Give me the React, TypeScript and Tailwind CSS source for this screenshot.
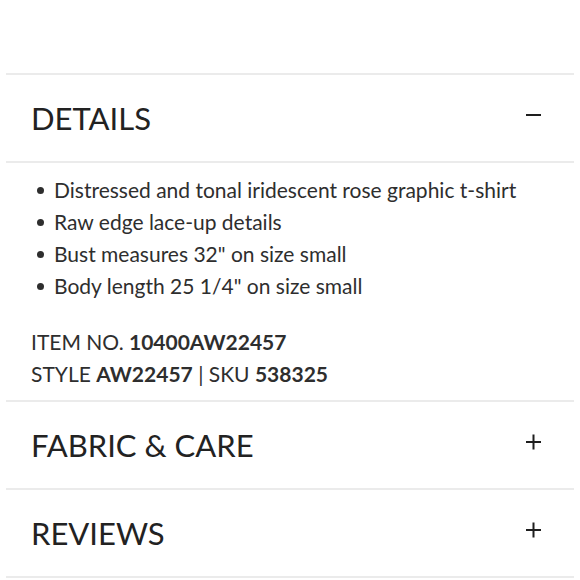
import React from "react";

const Minus = () => (
  <svg width="15" height="16" viewBox="0 0 15 16" className="block">
    <rect x="0" y="7" width="15" height="2" fill="#1e1e1e" />
  </svg>
);

const Plus = () => (
  <svg width="15" height="16" viewBox="0 0 15 16" className="block">
    <rect x="0" y="7" width="15" height="2" fill="#1e1e1e" />
    <rect x="6.5" y="0.5" width="2" height="15" fill="#1e1e1e" />
  </svg>
);

const Header = ({ title, open }: { title: string; open?: boolean }) => (
  <div className="flex h-[86px] items-center justify-between pl-[25px] pr-[33px]">
    <span className="text-[31px] leading-none text-[#222]">{title}</span>
    <span className="-mt-[6px]">{open ? <Minus /> : <Plus />}</span>
  </div>
);

const Divider = () => <div className="h-[2px] bg-[#ebebeb]" />;

export default function App() {
  const bullets = [
    "Distressed and tonal iridescent rose graphic t-shirt",
    "Raw edge lace-up details",
    'Bust measures 32" on size small',
    'Body length 25 1/4" on size small',
  ];
  return (
    <div
      className="w-[580px] h-[580px] bg-white overflow-hidden"
      style={{ fontFamily: "Lato, 'Open Sans', sans-serif" }}
    >
      <div className="h-[73px]" />
      <div className="mx-[6px]">
        <Divider />
        <Header title="DETAILS" open />
        <Divider />
        <div className="pl-[25px] pt-[11px] pb-[10px] text-[21px] leading-[32px] text-[#2e2e2e]">
          <ul>
            {bullets.map((b) => (
              <li key={b} className="flex items-center">
                <span className="ml-[6px] mr-[11px] inline-block w-[7px] h-[7px] rounded-full bg-[#2e2e2e]" />
                <span className="-ml-[1px]">{b}</span>
              </li>
            ))}
          </ul>
          <div className="mt-[24px]">
            ITEM NO. <span className="font-bold">10400AW22457</span>
          </div>
          <div>
            STYLE <span className="font-bold">AW22457</span> | SKU{" "}
            <span className="font-bold">538325</span>
          </div>
        </div>
        <Divider />
        <Header title="FABRIC & CARE" />
        <Divider />
        <Header title="REVIEWS" />
        <Divider />
      </div>
    </div>
  );
}
